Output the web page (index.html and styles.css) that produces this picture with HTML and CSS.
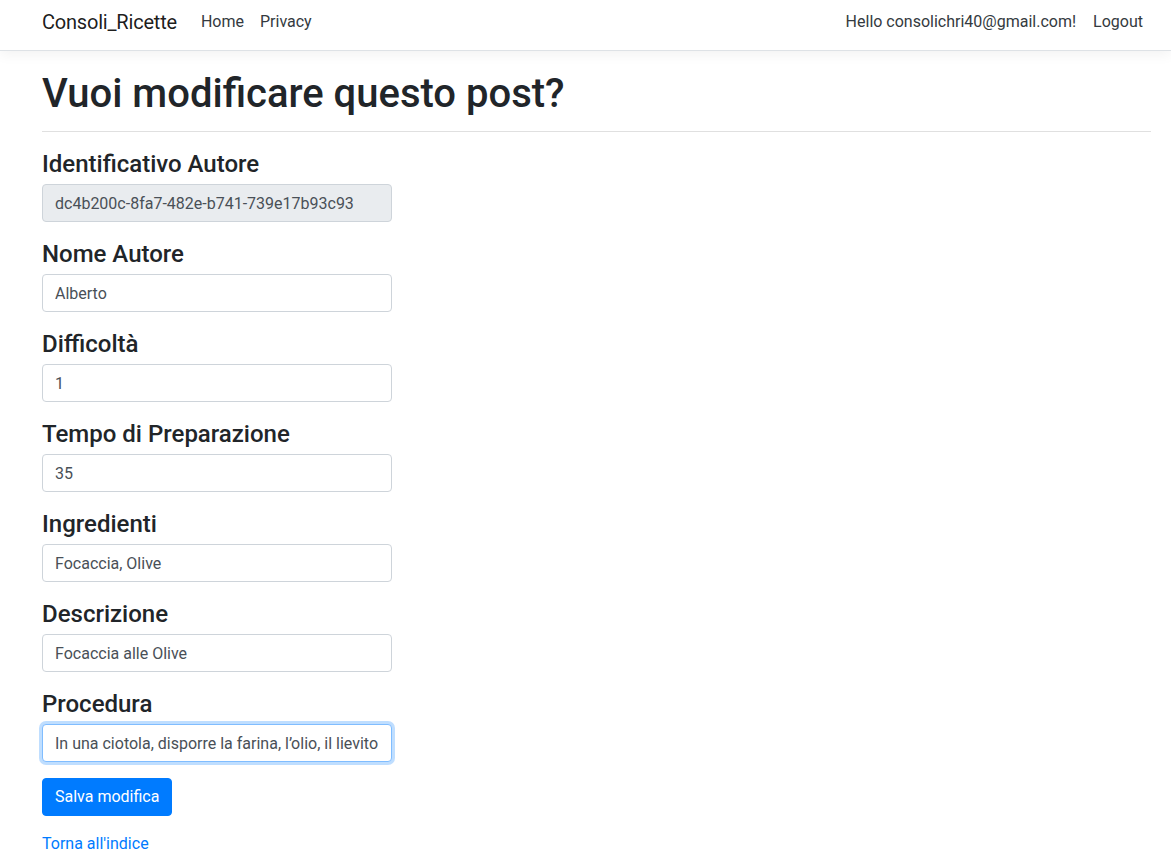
FILE: index.html
```html
<!DOCTYPE html>
<html lang="it">
<head>
<meta charset="utf-8">
<title>Modifica - Consoli_Ricette</title>
<link rel="stylesheet" href="styles.css">
</head>
<body>
<header class="navbar">
  <div class="container nav-inner">
    <a class="brand" href="#">Consoli_Ricette</a>
    <ul class="nav-links">
      <li><a class="nav-link" href="#">Home</a></li>
      <li><a class="nav-link" href="#">Privacy</a></li>
    </ul>
    <ul class="nav-links nav-right">
      <li><a class="nav-link" href="#">Hello consolichri40@gmail.com!</a></li>
      <li><a class="nav-link" href="#">Logout</a></li>
    </ul>
  </div>
</header>
<main class="container main">
  <h1 class="title">Vuoi modificare questo post?</h1>
  <hr class="divider">
  <form class="edit-form">
    <div class="form-group">
      <label class="form-label">Identificativo Autore</label>
      <input class="form-control" type="text" value="dc4b200c-8fa7-482e-b741-739e17b93c93" readonly disabled>
    </div>
    <div class="form-group">
      <label class="form-label">Nome Autore</label>
      <input class="form-control" type="text" value="Alberto">
    </div>
    <div class="form-group">
      <label class="form-label">Difficoltà</label>
      <input class="form-control" type="text" value="1">
    </div>
    <div class="form-group">
      <label class="form-label">Tempo di Preparazione</label>
      <input class="form-control" type="text" value="35">
    </div>
    <div class="form-group">
      <label class="form-label">Ingredienti</label>
      <input class="form-control" type="text" value="Focaccia, Olive">
    </div>
    <div class="form-group">
      <label class="form-label">Descrizione</label>
      <input class="form-control" type="text" value="Focaccia alle Olive">
    </div>
    <div class="form-group">
      <label class="form-label">Procedura</label>
      <input class="form-control is-focused" type="text" value="In una ciotola, disporre la farina, l’olio, il lievito di birra sciolto in acqua tiepida e il sale.">
    </div>
    <button class="btn-primary" type="button">Salva modifica</button>
  </form>
  <div class="back">
    <a class="link" href="#">Torna all'indice</a>
  </div>
</main>
</body>
</html>
```
FILE: styles.css
```css
*, *::before, *::after { box-sizing: border-box; }

html, body {
  margin: 0;
  padding: 0;
}

body {
  font-family: Roboto, "Noto Sans", "Liberation Sans", sans-serif;
  font-size: 16px;
  line-height: 1.5;
  color: #212529;
  background: #fff;
}

a { text-decoration: none; }

.container {
  width: 1109px;
  margin-left: 42px;
}

/* navbar */
.navbar {
  height: 51px;
  background: #fff;
  border-bottom: 1px solid #dee2e6;
  box-shadow: 0 4px 12px rgba(0, 0, 0, 0.05);
}

.nav-inner {
  height: 50px;
  display: flex;
  align-items: center;
  padding-bottom: 6px;
}

.brand {
  font-size: 20px;
  line-height: 30px;
  color: rgba(0, 0, 0, 0.9);
  margin-right: 16px;
  letter-spacing: -0.2px;
}

.nav-links {
  display: flex;
  list-style: none;
  margin: 0;
  padding: 0;
}

.nav-right {
  margin-left: auto;
}

.nav-link {
  display: block;
  padding: 0 8px;
  color: #343a40;
  font-size: 16px;
  line-height: 24px;
}

.nav-right .nav-link {
  padding: 0 8px 0 9px;
}

/* main */
.main {
  padding-top: 19px;
}

.title {
  margin: 0 0 13px;
  font-size: 40px;
  font-weight: 500;
  line-height: 48px;
}

.divider {
  margin: 0 0 16px;
  border: 0;
  border-top: 1px solid rgba(0, 0, 0, 0.12);
  height: 0;
}

.form-group {
  margin-bottom: 16px;
  display: flex;
  flex-direction: column;
  align-items: flex-start;
}

.form-label {
  font-size: 24px;
  font-weight: 500;
  line-height: 28px;
  padding-top: 2px;
  margin-bottom: 6px;
}

.form-control {
  display: block;
  width: 350px;
  height: 38px;
  padding: 6px 12px;
  font-family: inherit;
  font-size: 16px;
  line-height: 1.5;
  color: #495057;
  background: #fff;
  border: 1px solid #ced4da;
  border-radius: 4px;
  outline: none;
}

.form-control:disabled {
  background: #e9ecef;
  color: #495057;
  opacity: 1;
  -webkit-text-fill-color: #495057;
}

.form-control.is-focused {
  border-color: #80bdff;
  box-shadow: 0 0 0 3px rgba(0, 123, 255, 0.25);
}

.btn-primary {
  display: block;
  height: 38px;
  padding: 6px 12px;
  font-family: inherit;
  font-size: 16px;
  line-height: 1.5;
  color: #fff;
  background: #007bff;
  border: 1px solid #007bff;
  border-radius: 4px;
  cursor: pointer;
}

.edit-form {
  margin-bottom: 16px;
}

.back {
  line-height: 24px;
}

.link {
  color: #007bff;
}
```
